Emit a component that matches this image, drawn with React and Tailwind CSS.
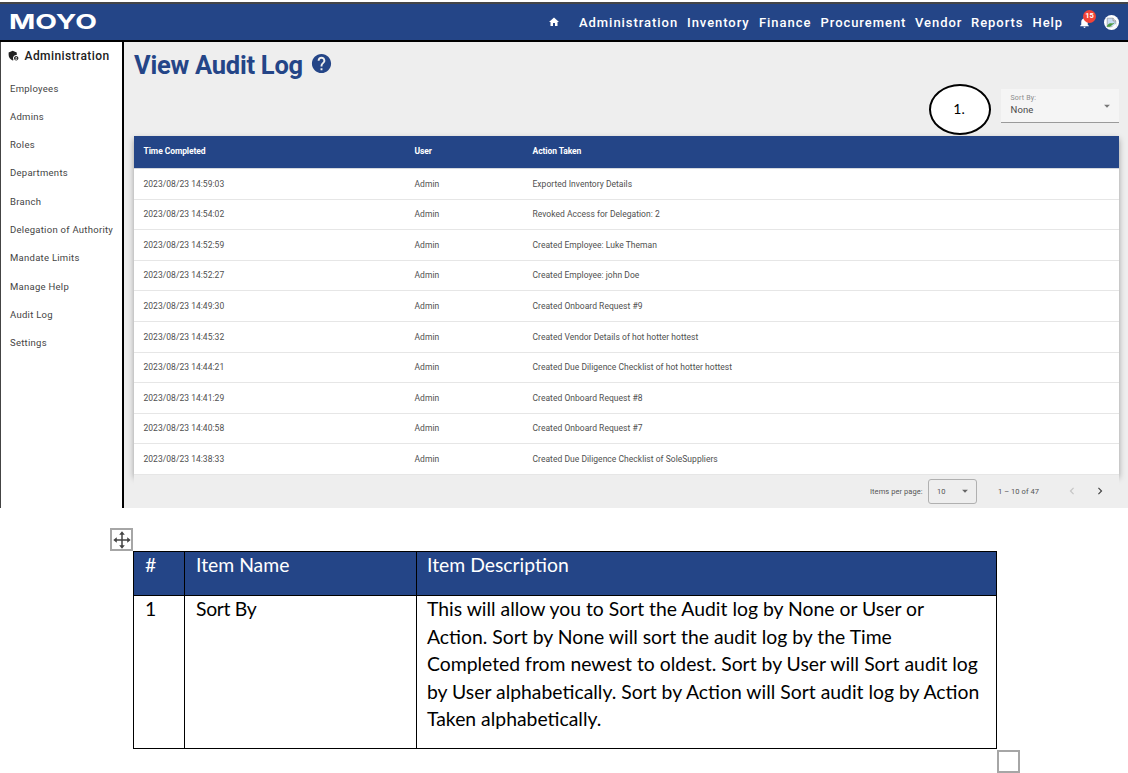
import React from "react";
import {
  MdAdminPanelSettings,
  MdArrowDropDown,
  MdChevronLeft,
  MdChevronRight,
  MdHelp,
  MdHome,
  MdNotifications,
} from "react-icons/md";

const NAV = [
  ["Administration", "w-[108px]"],
  ["Inventory", "w-[72px]"],
  ["Finance", "w-[61.500px]"],
  ["Procurement", "w-[94.500px]"],
  ["Vendor", "w-[56px]"],
  ["Reports", "w-[61.500px]"],
  ["Help", "w-[39.500px]"],
];

const SIDE = [
  "Employees",
  "Admins",
  "Roles",
  "Departments",
  "Branch",
  "Delegation of Authority",
  "Mandate Limits",
  "Manage Help",
  "Audit Log",
  "Settings",
];

const ROWS = [
  ["14:59:03", "Exported Inventory Details"],
  ["14:54:02", "Revoked Access for Delegation: 2"],
  ["14:52:59", "Created Employee: Luke Theman"],
  ["14:52:27", "Created Employee: john Doe"],
  ["14:49:30", "Created Onboard Request #9"],
  ["14:45:32", "Created Vendor Details of hot hotter hottest"],
  ["14:44:21", "Created Due Diligence Checklist of hot hotter hottest"],
  ["14:41:29", "Created Onboard Request #8"],
  ["14:40:58", "Created Onboard Request #7"],
  ["14:38:33", "Created Due Diligence Checklist of SoleSuppliers"],
];

const DESCRIPTION = [
  "This will allow you to Sort the Audit log by None or User or",
  "Action. Sort by None will sort the audit log by the Time",
  "Completed from newest to oldest. Sort by User will Sort audit log",
  "by User alphabetically. Sort by Action will Sort audit log by Action",
  "Taken alphabetically.",
];

function Avatar() {
  return (
    <svg viewBox="0 0 14 14" className="size-[15px]">
      <circle cx="7" cy="7" r="7" fill="#fff" />
      <path d="M3 3h5.500l2.500 2.500v5.500h-8z" fill="#c9dcf3" stroke="#9aa3ad" strokeWidth=".8" />
      <path d="M2.500 11c1-3 3-4 5-3l3-1-5 4z" fill="#4d9a3f" />
      <path d="M6.500 12l5-4V12z" fill="#fff" />
      <path d="M8.500 3v2.500H11" fill="#fff" stroke="#888" strokeWidth=".8" />
    </svg>
  );
}

function TopBar() {
  return (
    <header className="flex h-[40px] shrink-0 items-center border-t-2 border-b-2 border-t-[#444547] border-b-black bg-[#244587] text-white">
      <div className="h-[20px] w-[100px] pl-[9px]">
        <div className="origin-left scale-x-[1.41] font-[Inter] text-[20px] leading-[20px] font-bold">MOYO</div>
      </div>
      <MdHome className="ml-[448px] size-[12px]" />
      <nav className="ml-[19px] flex text-[13px] leading-none font-medium tracking-[0.95px] whitespace-nowrap">
        {NAV.map(([label, width]) => (
          <span key={label} className={width}>{label}</span>
        ))}
      </nav>
      <div className="relative ml-[6px]">
        <MdNotifications className="size-[13px]" />
        <span className="absolute -top-[6px] left-[5px] flex size-[13px] items-center justify-center rounded-full bg-[#f44336] text-[7.500px] leading-none font-bold">
          15
        </span>
      </div>
      <div className="ml-[13px]">
        <Avatar />
      </div>
    </header>
  );
}

function Sidebar() {
  return (
    <aside className="w-[124px] shrink-0 border-r-2 border-l border-r-black border-l-[#444] bg-white">
      <div className="flex h-[28px] items-center pl-[6px] text-[#212121]">
        <MdAdminPanelSettings className="mb-px size-[13px]" />
        <span className="ml-[4.500px] text-[12px] font-medium tracking-[0.42px]">Administration</span>
      </div>
      <ul className="pt-[4.700px] pl-[9px] text-[9.500px] tracking-[0.27px] whitespace-nowrap text-[#444]">
        {SIDE.map((s) => (
          <li key={s} className="flex h-[28.270px] items-center">{s}</li>
        ))}
      </ul>
    </aside>
  );
}

function AuditTable() {
  return (
    <div className="shadow-[0_3px_6px_rgba(0,0,0,0.35)]">
      <div className="grid h-[33px] grid-cols-[271px_118px_1fr] items-center border-b border-[#d5d8de] bg-[#244587] pb-px pl-[9.500px] text-[8.500px] font-bold tracking-[-0.08px] text-white">
        <span>Time Completed</span>
        <span>User</span>
        <span>Action Taken</span>
      </div>
      {ROWS.map(([time, action]) => (
        <div
          key={time}
          className="grid h-[30.600px] grid-cols-[271px_118px_1fr] items-center border-b border-[#e6e6e6] bg-white pt-[0.300px] pl-[9.500px] text-[8.500px] tracking-[0.03px] text-[#505050]"
        >
          <span>2023/08/23 {time}</span>
          <span>Admin</span>
          <span>{action}</span>
        </div>
      ))}
    </div>
  );
}

function Paginator() {
  return (
    <div className="flex h-[33px] items-center bg-[#eeeeee] text-[7.500px] whitespace-nowrap text-[#555]">
      <span className="ml-[736px] w-[58px] tracking-[0.06px]">Items per page:</span>
      <div className="flex h-[25px] w-[49px] items-center justify-between rounded-[3px] border border-[#b0b0b0] pr-[4px] pl-[8px]">
        <span>10</span>
        <MdArrowDropDown className="size-[14px] text-[#666]" />
      </div>
      <span className="ml-[21px] w-[67px] tracking-[0.06px]">1 – 10 of 47</span>
      <MdChevronLeft className="size-[14px] text-[#c4c4c4]" />
      <MdChevronRight className="ml-[14px] size-[14px] text-[#444]" />
    </div>
  );
}

function AuditApp() {
  return (
    <section className="flex h-[508px] flex-col pt-[2px] font-[Roboto]">
      <TopBar />
      <div className="flex h-[466px] overflow-hidden">
        <Sidebar />
        <main className="flex-1 bg-[#eeeeee] pr-[9px] pl-[10px]">
          <div className="flex h-[47px] items-center text-[#244587]">
            <h1 className="text-[25.500px] font-bold tracking-[-0.25px]">View Audit Log</h1>
            <MdHelp className="mb-[4px] ml-[7px] size-[23px]" />
          </div>
          <div className="flex h-[47px] items-start justify-end">
            <div className="-mt-[5px] mr-[10px] flex h-[51px] w-[62px] items-center justify-center rounded-[50%] border-2 border-black bg-white pr-[2px] pb-[2px] font-[Lato] text-[14px] text-black">
              1.
            </div>
            <div className="flex h-[34px] w-[118px] items-center justify-between border-b border-[#9a9a9a] bg-[#f5f5f5] pr-[5px] pl-[9.500px]">
              <div className="pb-[2px]">
                <div className="text-[7px] leading-[11px] tracking-[0.2px] text-[#8c8c8c]">Sort By:</div>
                <div className="text-[9.500px] leading-[12px] tracking-[0.1px] text-[#4a4a4a]">None</div>
              </div>
              <MdArrowDropDown className="size-[14px] text-[#777]" />
            </div>
          </div>
          <AuditTable />
          <Paginator />
        </main>
      </div>
    </section>
  );
}

function DescriptionTable() {
  return (
    <section className="font-[Lato] text-[19.380px] leading-[27.500px] whitespace-nowrap">
      <div className="mt-[20px] ml-[110px] flex size-[23px] items-center justify-center border-2 border-[#a6a6a6]">
        <svg viewBox="0 0 18 18" className="size-[18px] shrink-0" fill="#444" stroke="#444">
          <path d="M9 3v12M3 9h12" strokeWidth="1.500" fill="none" />
          <path d="M9 .3l2.800 3.500H6.200zM9 17.700l2.800-3.500H6.200zM.3 9l3.500-2.800v5.600zM17.700 9l-3.500-2.800v5.600z" stroke="none" />
        </svg>
      </div>
      <div className="ml-[133px] grid w-[864px] grid-cols-[51px_232px_1fr] border border-black">
        <div className="h-[44px] border-r border-b border-black bg-[#244587] pl-[11px] leading-[26px] text-white">#</div>
        <div className="border-r border-b border-black bg-[#244587] pl-[11px] leading-[26px] text-white">Item Name</div>
        <div className="border-b border-black bg-[#244587] pl-[10px] leading-[26px] text-white">Item Description</div>
        <div className="h-[152px] border-r border-black pl-[11px] leading-[26px]">1</div>
        <div className="border-r border-black pl-[11px] leading-[26px] tracking-[-0.3px]">Sort By</div>
        <div className="-mt-px pl-[10px]">
          {DESCRIPTION.map((line) => (
            <div key={line}>{line}</div>
          ))}
        </div>
      </div>
      <div className="mt-[1px] ml-[997px] size-[23px] border-2 border-[#a6a6a6]" />
    </section>
  );
}

export default function App() {
  return (
    <div className="h-[773px] w-[1128px] overflow-hidden bg-white text-black">
      <AuditApp />
      <DescriptionTable />
    </div>
  );
}
